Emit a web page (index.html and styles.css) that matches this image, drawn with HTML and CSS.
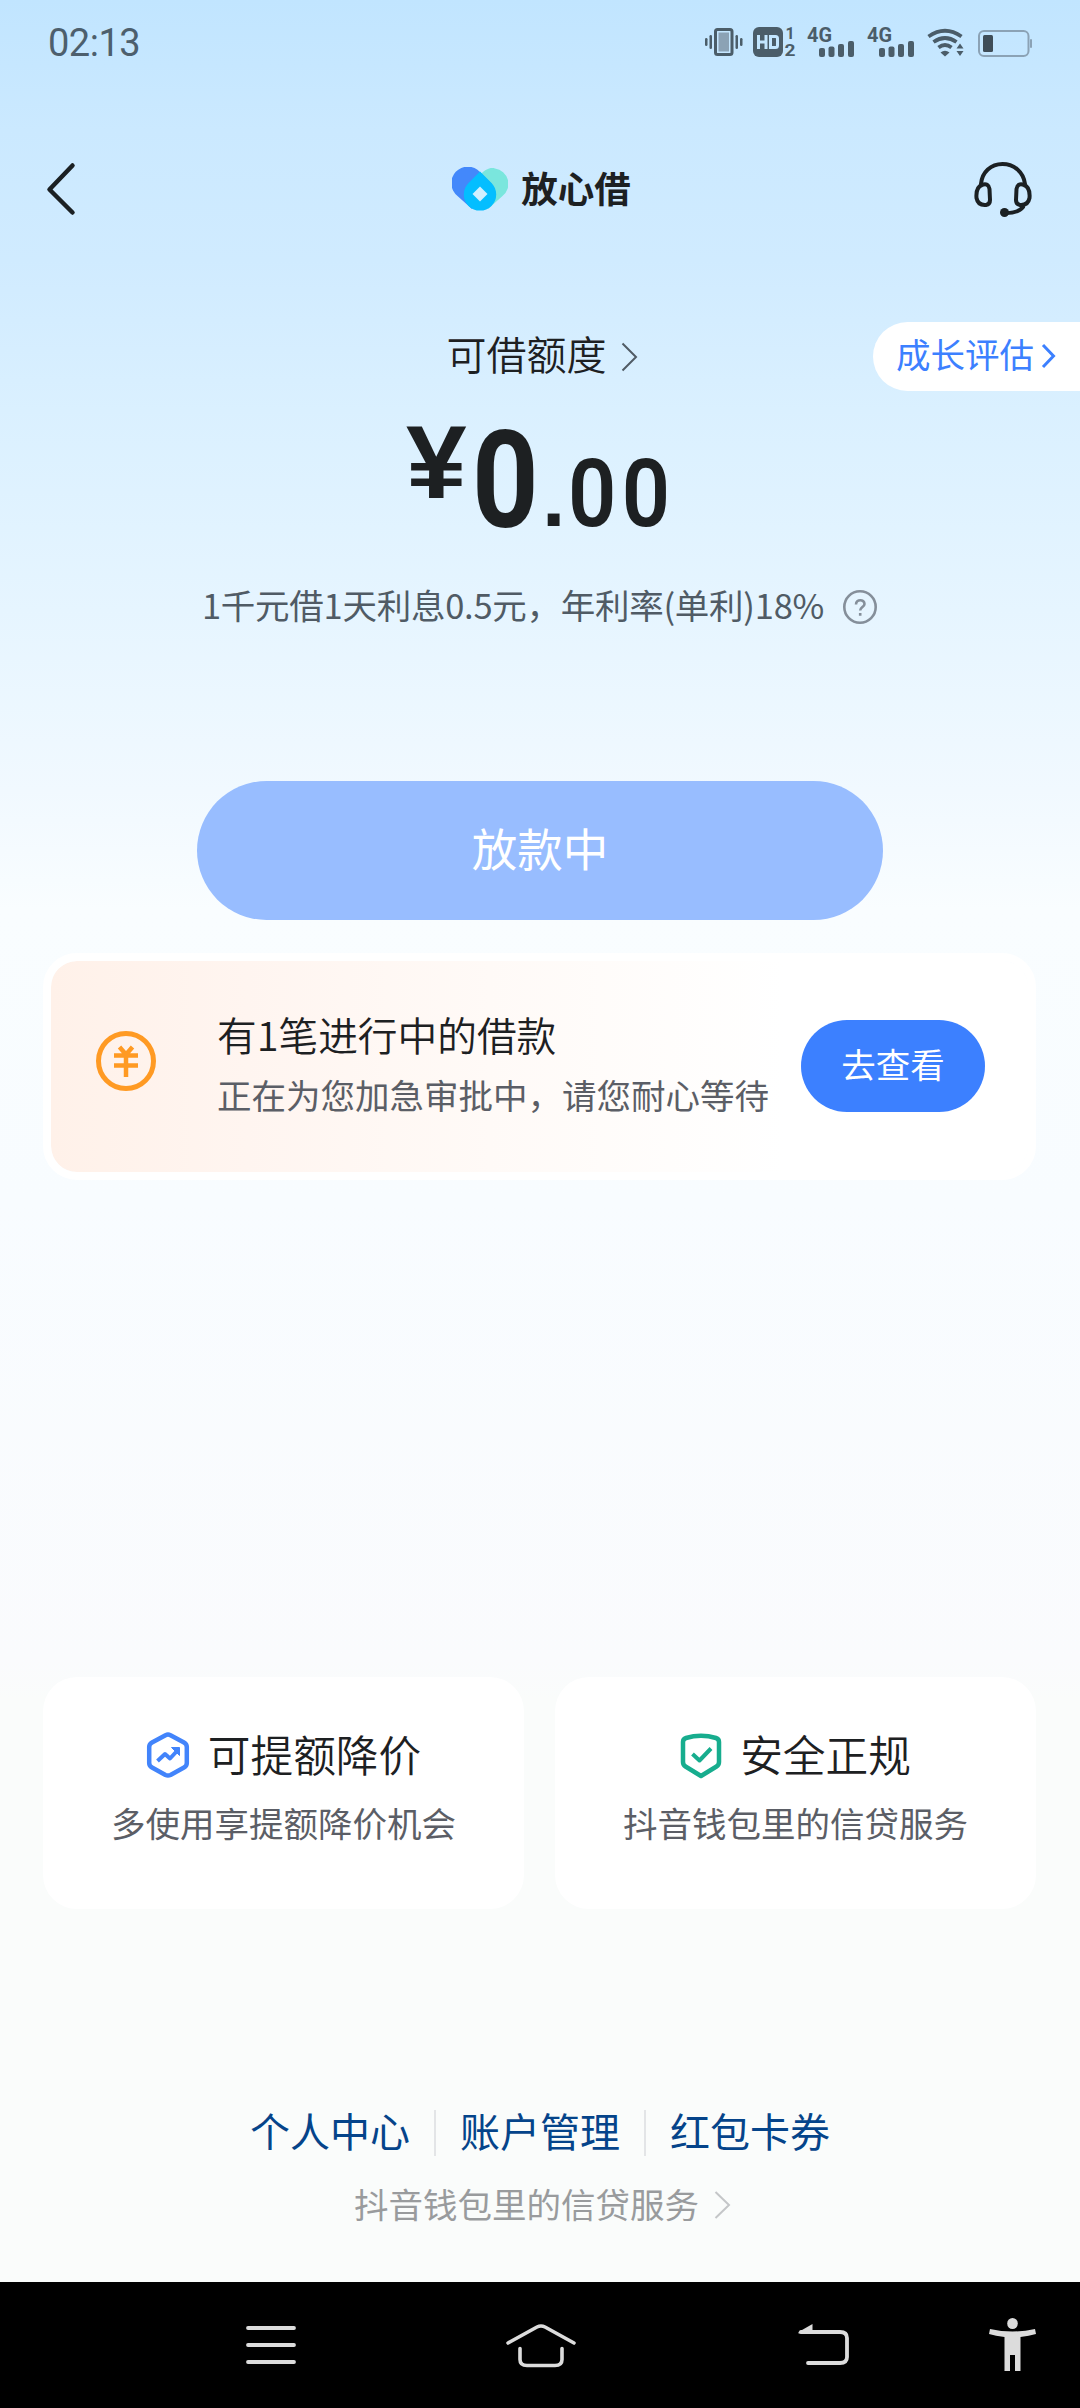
FILE: index.html
```html
<!DOCTYPE html>
<html lang="zh-CN">
<head>
<meta charset="utf-8">
<title>放心借</title>
<link rel="stylesheet" href="styles.css">
</head>
<body>
<main class="screen">
  <header class="status">
    <time class="clock">02:13</time>
    <svg class="status-icons" width="330" height="50" viewBox="704 17 330 50" fill="#4b5d69">
      <!-- vibrate -->
      <rect x="715.5" y="29.5" width="16.500" height="25" rx="2" fill="none" stroke="#4b5d69" stroke-width="3"/>
      <rect x="718.500" y="32.500" width="10.500" height="19" fill="#8ba2b5"/>
      <rect x="705" y="38" width="2.500" height="8" rx="1.200"/><rect x="709.500" y="35" width="2.500" height="14" rx="1.200"/>
      <rect x="735.500" y="35" width="2.500" height="14" rx="1.200"/><rect x="740" y="38" width="2.500" height="8" rx="1.200"/>
      <!-- HD badge -->
      <rect x="753" y="27" width="30" height="30" rx="6"/>
      <path d="M758.500 35v14M766 35v14M758.500 42h7.500M770.500 36.500h5a2 2 0 0 1 2 2v7a2 2 0 0 1-2 2h-5z" fill="none" stroke="#c3e6ff" stroke-width="3"/>
      <text class="sim" x="785.500" y="38.500">1</text><text class="sim" x="784.500" y="56" textLength="11" lengthAdjust="spacingAndGlyphs">2</text>
      <!-- signals -->
      <g id="signal">
        <text class="net" x="807" y="41.500" textLength="25" lengthAdjust="spacingAndGlyphs">4G</text>
        <rect x="819" y="48" width="6" height="9" rx="2"/><rect x="828.500" y="46.500" width="6" height="10.500" rx="2"/>
        <rect x="838" y="44" width="6" height="13" rx="2"/><rect x="848" y="41" width="6" height="16" rx="2"/>
      </g>
      <use href="#signal" x="60"/>
      <!-- wifi -->
      <path d="M928.500 36.500q16.500-11.500 33 0M933.500 42q11.500-8 23 0M938.500 47.500q6.500-5 13 0" fill="none" stroke="#4b5d69" stroke-width="3.800"/>
      <path d="M940.500 52.500q4.500-3.500 9 0l-4.500 4z"/>
      <path d="M960 43.500l3.500 5h-7zM960 56l3.500-5h-7z"/>
      <!-- battery -->
      <rect x="979" y="31" width="49.500" height="25" rx="5" fill="none" stroke="#8ba2b5" stroke-width="2"/>
      <rect x="983" y="35" width="10" height="17" rx="1.500" fill="#3f4d58"/>
      <rect x="1030" y="39" width="2" height="9" rx="1" fill="#8ba2b5"/>
    </svg>
  </header>

  <nav class="topbar">
    <svg width="32" height="56" viewBox="45 161 32 56" fill="none" stroke="#1b2023" stroke-width="4.500" stroke-linecap="round" stroke-linejoin="round"><path d="M72.500 165.500 49.500 189.500l23 23"/></svg>
    <div class="brand">
      <svg width="56" height="44" viewBox="452 168 56 44">
        <path d="M479 178C484 170 491 168 495 169.500A15.500 15.500 0 0 1 502.500 197L488 210 470 190z" fill="#7ae6dd"/>
        <path d="M480 173a16.500 16.500 0 1 0-22.500 24L472 210 492 185z" fill="#4388fb"/>
        <path d="M480 172.500l11.500 11.500a16.200 16.200 0 1 1-23 0z" fill="#04beff"/>
        <path d="M480 187.500l7.500 7.500-7.500 7.500-7.500-7.500z" fill="#d2f0ff"/>
      </svg>
      <span class="brand-name">放心借</span>
    </div>
    <svg width="60" height="58" viewBox="972 162 60 58" fill="none" stroke="#1b2023" stroke-width="4" stroke-linecap="round" stroke-linejoin="round">
      <path d="M981 186c1-12 10-20 21.500-20s21 8 22.500 20"/>
      <path d="M982 187c4-2 7 0 7.500 4l.5 11c0 3-1 4.500-4 5-6 .5-8.500-2-9.500-7-.5-6 0-11 5.500-13zM1024 187c-4-2-7 0-7.500 4l-.5 11c0 3 1 4.500 4 5 6 .5 8.500-2 9.500-7 .5-6 0-11-5.500-13z"/>
      <path d="M1023 209c-3 4-8 6-17 6"/><circle cx="1004.500" cy="214.500" r="4.500" fill="#1b2023" stroke="none"/>
    </svg>
  </nav>

  <section class="limit">
    <div class="limit-title"><span>可借额度</span>
      <svg width="17" height="30" viewBox="0 0 17 30" fill="none" stroke="#505b65" stroke-width="2"><path d="M1.500 1.500 15 15 1.500 28.500"/></svg>
    </div>
    <a class="growth"><span>成长评估</span>
      <svg width="15" height="26" viewBox="0 0 15 26" fill="none" stroke="#3c80ff" stroke-width="3"><path d="M2 2 12.500 13 2 24"/></svg>
    </a>
  </section>

  <div class="amount"><span class="yen">¥</span><span class="int">0</span><span class="dot">.</span><span class="dec">00</span></div>

  <p class="rate"><span>1千元借1天利息0.5元，年利率(单利)18%</span>
    <svg width="36" height="36" viewBox="0 0 36 36" fill="none" stroke="#858f9a" stroke-width="2.600"><circle cx="18" cy="18" r="15.700"/><path d="M14 15.500c0-5.800 8.500-5.500 8.500-.6 0 3-4.300 3.300-4.300 6.600M18.200 24v2.800"/></svg>
  </p>

  <button class="primary">放款中</button>

  <section class="loan">
    <svg width="62" height="62" viewBox="0 0 62 62" fill="none" stroke="#ff9a23" stroke-width="5"><circle cx="31" cy="31" r="27.500"/><path d="M24.500 17l6.500 7.500 6.500-7.500M19 25.500h24M19 35.500h24M31 25v22" stroke-width="4.500"/></svg>
    <div class="loan-text"><h2>有1笔进行中的借款</h2><p>正在为您加急审批中，请您耐心等待</p></div>
    <button class="check">去查看</button>
  </section>

  <section class="features">
    <article class="feature">
      <h3><svg width="44" height="48" viewBox="145 1733 44 48" fill="none" stroke="#4284fb" stroke-width="4.500" stroke-linejoin="round"><path d="M164.500 1737.200q2.500-1.200 5 0l13.500 7.300q2.800 1.500 2.800 4.500v16q0 3-2.800 4.500l-13.500 7.500q-2.500 1.200-5 0l-13.500-7.500q-2.800-1.500-2.800-4.500v-16q0-3 2.800-4.500z"/><path d="M156.500 1763l7.500-7 5 4.500 7-7.500" stroke-width="4"/><path d="M170.500 1749.500h8v8z" fill="#4284fb" stroke-width="1"/></svg><span>可提额降价</span></h3>
      <p>多使用享提额降价机会</p>
    </article>
    <article class="feature">
      <h3><svg width="42" height="48" viewBox="680 1733 42 48" fill="none" stroke="#17ad8e" stroke-width="4.500" stroke-linejoin="round"><path d="M686 1740q15-4.500 30 0 3 1 3 4v20q0 3-2.500 4.500L701 1778l-15.500-9.500q-2.500-1.500-2.500-4.500v-20q0-3 3-4z"/><path d="M692.500 1756l7 6.500 11.500-12" stroke-width="4"/></svg><span>安全正规</span></h3>
      <p>抖音钱包里的信贷服务</p>
    </article>
  </section>

  <nav class="links"><a>个人中心</a><a>账户管理</a><a>红包卡券</a></nav>
  <p class="provider"><span>抖音钱包里的信贷服务</span>
    <svg width="17" height="28" viewBox="0 0 17 28" fill="none" stroke="#c4c6c8" stroke-width="2"><path d="M1.500 1 15 14 1.500 27"/></svg>
  </p>

  <footer class="system">
    <svg width="52" height="42" viewBox="245 2324 52 42" stroke="#dcdcdc" stroke-width="3.800" stroke-linecap="round"><path d="M248 2328h46M248 2345h46M248 2362h46"/></svg>
    <svg width="72" height="46" viewBox="505 2321 72 46" fill="none" stroke="#dcdcdc" stroke-width="3.600" stroke-linecap="round" stroke-linejoin="round"><path d="M508 2342l29-16q4-2 8 0l29 16M520 2347.500v11q0 6 7 6h28q7 0 7-6v-11"/></svg>
    <svg width="54" height="46" viewBox="797 2321 54 46" fill="none" stroke="#dcdcdc" stroke-width="3.800" stroke-linecap="round"><path d="M801 2331h39q7 0 7 6v19q0 6-7 6h-32"/><path d="M798.500 2332.500v-1.500l14-8v9.500z" fill="#dcdcdc" stroke="none"/></svg>
    <svg width="50" height="56" viewBox="988 2318 50 56" fill="#dcdcdc"><ellipse cx="1012.500" cy="2324.500" rx="5.300" ry="5.500"/><path d="M990 2330q22.500 5 45 0l1 5q-7 2-15.500 3v34h-5.500v-16h-5v16h-5.500v-34q-9-1-15.500-3z"/></svg>
  </footer>
</main>
</body>
</html>
```
FILE: styles.css
```css
* { box-sizing: border-box; margin: 0; padding: 0; }

body {
  font-family: "Noto Sans CJK SC", sans-serif;
  color: #1d2022;
}

h2, h3 { font-weight: 350; }
button { border: 0; font-family: inherit; color: #fff; }
svg { display: block; flex: none; }

.screen {
  width: 1080px;
  height: 2408px;
  display: flex;
  flex-direction: column;
  overflow: hidden;
  background: linear-gradient(#c1e5ff 0, #cbe9ff 130px, #d0ebff 260px, #daf0ff 410px, #e6f5ff 610px, #f1f9ff 790px, #f9fdff 910px, #f8fcff 1200px, #fafbfd 1660px, #fafcfb 1700px);
}

.status {
  height: 84px;
  padding: 0 46px 0 48px;
  display: flex;
  align-items: center;
  justify-content: space-between;
}
.clock { font: 400 38px/84px Roboto, sans-serif; letter-spacing: -0.5px; color: #4d5f6d; padding-top: 1px; }
.sim { font: 700 16px Roboto, sans-serif; }
.net { font: 700 21px Roboto, sans-serif; }

.topbar {
  height: 210px;
  padding: 0 48px 0 45px;
  display: grid;
  grid-template-columns: 1fr auto 1fr;
  align-items: center;
}
.topbar > :last-child { justify-self: end; }
.brand { display: flex; align-items: center; gap: 13px; margin-left: 6px; }
.brand-name { font-size: 36.5px; line-height: 50px; font-weight: 700; margin-top: -3px; }

.limit {
  position: relative;
  height: 69px;
  margin-top: 28px;
  padding-left: 4px;
  display: flex;
  justify-content: center;
}
.limit-title { display: flex; align-items: center; gap: 14px; font-size: 40px; line-height: 62px; }
.limit-title span { margin-top: -8px; font-weight: 350; }
.growth {
  position: absolute;
  top: 0;
  right: 0;
  width: 207px;
  height: 69px;
  padding-left: 23px;
  display: flex;
  align-items: center;
  gap: 7px;
  border-radius: 35px 0 0 35px;
  background: #fff;
  color: #3c80ff;
  font-size: 34.5px;
  line-height: 62px;
}
.growth span { margin-top: -7px; }
.growth svg { margin-top: -2px; }

.amount {
  height: 180px;
  padding: 23px 0 0 406px;
  display: flex;
  align-items: flex-start;
  font-family: Roboto, sans-serif;
  font-weight: 700;
}
.amount span { transform-origin: 0 0; }
.yen { font: 700 103px/100px "Liberation Sans", sans-serif; margin-top: -1px; width: 66px; transform: scaleX(1.06); }
.int { font-size: 135px; line-height: 135px; width: 70px; transform: scaleX(0.86); }
.dot { font: 700 84px/94px "Liberation Sans", sans-serif; margin-top: 36px; width: 26px; }
.dec { font-size: 94px; line-height: 94px; margin-top: 33px; letter-spacing: 6px; font-weight: 600; transform: scaleX(0.9); }

.rate {
  height: 66px;
  display: flex;
  justify-content: center;
  align-items: center;
  gap: 18px;
  font-size: 34.5px;
  line-height: 66px;
  letter-spacing: -0.26px;
  color: #505b65;
}
.rate svg { margin-top: 5px; }

.primary {
  width: 686px;
  height: 139px;
  margin: 144px auto 0;
  padding-bottom: 8px;
  border-radius: 70px;
  background: #98bdff;
  font-size: 45.500px;
}

.loan {
  height: 227px;
  margin: 33px 44px 0 43px;
  padding: 0 43px 12px 44px;
  display: flex;
  align-items: center;
  border: 8px solid #fff;
  border-radius: 34px;
  background: linear-gradient(90deg, #fff1e9, #fff5f0 20%, #fffaf7 45%, #fff 75%);
  background-clip: padding-box;
  background-color: #fff;
}
.loan-text { margin: 5px 0 0 60px; width: 585px; }
.loan h2 { font-size: 39.700px; line-height: 62px; }
.loan p { font-size: 34.500px; line-height: 58px; color: #5b5e66; white-space: nowrap; }
.check {
  width: 184px;
  height: 92px;
  margin-top: 11px;
  padding-bottom: 6px;
  border-radius: 46px;
  background: #3c80ff;
  font-size: 34.500px;
}

.features {
  margin: 497px 44px 0 43px;
  display: grid;
  grid-template-columns: 481px 481px;
  justify-content: space-between;
}
.feature {
  height: 232px;
  padding-top: 49px;
  border-radius: 34px;
  background: #fff;
  text-align: center;
}
.feature h3 { display: flex; justify-content: center; align-items: center; gap: 18px; font-size: 42.700px; line-height: 62px; }
.feature h3 span { margin-top: -4px; }
.feature p { margin-top: 8px; font-size: 34.500px; line-height: 60px; color: #5b5e66; }

.links {
  height: 46px;
  margin-top: 201px;
  display: flex;
  justify-content: center;
  font-size: 40px;
  line-height: 40px;
  color: #05448a;
}
.links a { padding: 0 24px; }
.links a + a { border-left: 2px solid #e3e5e7; }

.provider {
  height: 60px;
  margin-top: 17px;
  padding-left: 5px;
  display: flex;
  justify-content: center;
  align-items: center;
  gap: 15px;
  font-size: 34.500px;
  line-height: 60px;
  color: #999b9d;
}
.provider svg { margin-top: 4px; }

.system {
  height: 126px;
  margin-top: 49px;
  padding: 0 42px 0 245px;
  display: grid;
  grid-template-columns: 260px 292px 191px 50px;
  align-items: center;
  background: #000;
}
```
